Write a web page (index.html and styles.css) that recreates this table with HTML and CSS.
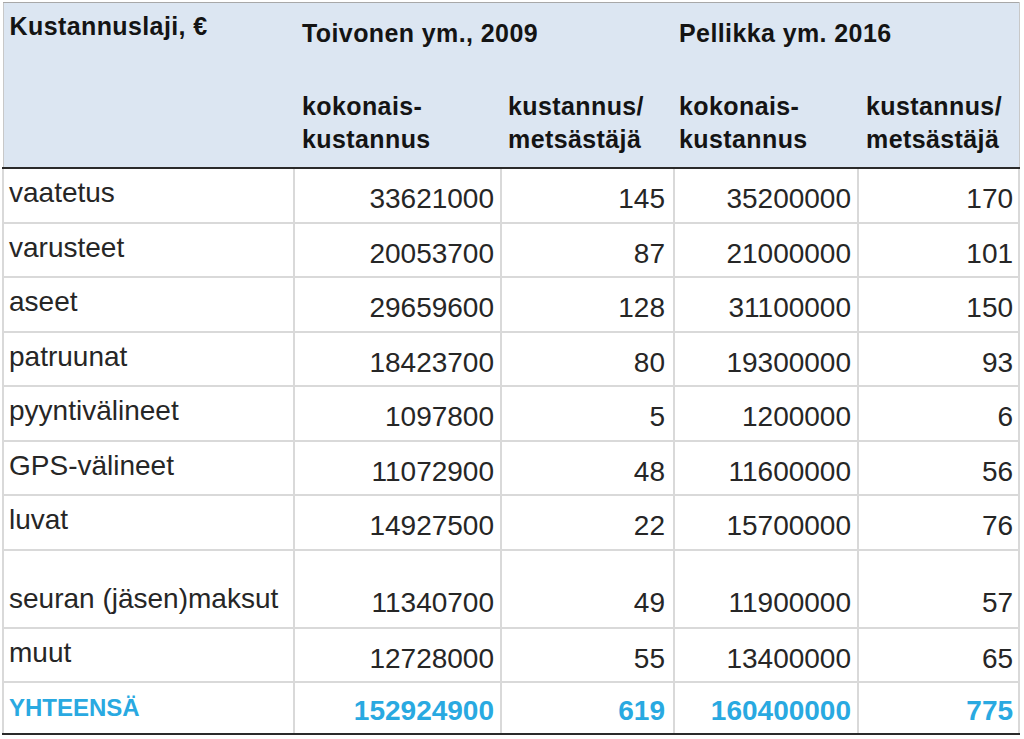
FILE: index.html
```html
<!DOCTYPE html>
<html lang="fi">
<head>
<meta charset="utf-8">
<title>Kustannuslaji</title>
<link rel="stylesheet" href="styles.css">
</head>
<body>
<div class="wrap">
<table class="cost">
  <colgroup>
    <col class="c1"><col class="c2"><col class="c3"><col class="c4"><col class="c5">
  </colgroup>
  <thead>
    <tr class="h1">
      <th class="lab" rowspan="2">Kustannuslaji, €</th>
      <th class="grp" colspan="2">Toivonen ym., 2009</th>
      <th class="grp g2" colspan="2">Pellikka ym. 2016</th>
    </tr>
    <tr class="h2">
      <th class="sub s2">kokonais-<br>kustannus</th>
      <th class="sub s3">kustannus/<br>metsästäjä</th>
      <th class="sub s4">kokonais-<br>kustannus</th>
      <th class="sub s5">kustannus/<br>metsästäjä</th>
    </tr>
  </thead>
  <tbody>
    <tr class="r"><td class="lab">vaatetus</td><td class="n n2">33621000</td><td class="n n3">145</td><td class="n n4">35200000</td><td class="n n5">170</td></tr>
    <tr class="r"><td class="lab">varusteet</td><td class="n n2">20053700</td><td class="n n3">87</td><td class="n n4">21000000</td><td class="n n5">101</td></tr>
    <tr class="r"><td class="lab">aseet</td><td class="n n2">29659600</td><td class="n n3">128</td><td class="n n4">31100000</td><td class="n n5">150</td></tr>
    <tr class="r"><td class="lab">patruunat</td><td class="n n2">18423700</td><td class="n n3">80</td><td class="n n4">19300000</td><td class="n n5">93</td></tr>
    <tr class="r"><td class="lab">pyyntivälineet</td><td class="n n2">1097800</td><td class="n n3">5</td><td class="n n4">1200000</td><td class="n n5">6</td></tr>
    <tr class="r"><td class="lab">GPS-välineet</td><td class="n n2">11072900</td><td class="n n3">48</td><td class="n n4">11600000</td><td class="n n5">56</td></tr>
    <tr class="r"><td class="lab">luvat</td><td class="n n2">14927500</td><td class="n n3">22</td><td class="n n4">15700000</td><td class="n n5">76</td></tr>
    <tr class="r tall"><td class="lab">seuran (jäsen)maksut</td><td class="n n2">11340700</td><td class="n n3">49</td><td class="n n4">11900000</td><td class="n n5">57</td></tr>
    <tr class="r"><td class="lab">muut</td><td class="n n2">12728000</td><td class="n n3">55</td><td class="n n4">13400000</td><td class="n n5">65</td></tr>
    <tr class="r total"><td class="lab">YHTEENSÄ</td><td class="n n2">152924900</td><td class="n n3">619</td><td class="n n4">160400000</td><td class="n n5">775</td></tr>
  </tbody>
</table>
</div>
</body>
</html>
```
FILE: styles.css
```css
html, body {
  margin: 0;
  padding: 0;
  background: #ffffff;
}
.wrap {
  padding: 2px 0 0 2px;
}
.cost {
  border-collapse: collapse;
  table-layout: fixed;
  width: 1016px;
  font-family: "Liberation Sans", Arial, sans-serif;
  color: #262626;
  border-top: 1px solid #a8a8a8;
  border-left: 1px solid #c8c8c8;
  border-right: 1px solid #c8c8c8;
}
.c1 { width: 291px; }
.c2 { width: 207px; }
.c3 { width: 173px; }
.c4 { width: 184px; }
.c5 { width: 161px; }

thead th {
  background: #dce6f2;
  color: #141414;
  font-weight: bold;
  font-size: 25px;
  line-height: 33px;
  text-align: left;
  padding: 0;
  letter-spacing: 0.4px;
}
thead tr.h2 th {
  border-bottom: 2px solid #2a2a2a;
}
th.lab {
  vertical-align: top;
  padding: 7px 0 0 6px;
  border-bottom: 2px solid #2a2a2a;
}
th.grp {
  vertical-align: top;
  height: 53px;
  padding: 14px 0 0 8px;
}
th.g2 { padding-left: 5px; }
th.sub {
  vertical-align: bottom;
  padding: 20px 0 11px 7px;
}
th.s2 { padding-left: 8px; }
th.s4 { padding-left: 5px; }
th.s5 { padding-left: 8px; }

tbody tr.r { height: 54.5px; }
tbody tr.tall { height: 78px; }
tbody tr.total { height: 52px; }

tbody td {
  font-size: 28px;
  line-height: 28px;
  border: 2px solid #d9d9d9;
  vertical-align: top;
  padding: 16px 0 0 0;
}
tbody tr.r:first-child td { border-top: 0; }
tbody td.lab {
  padding: 10px 0 0 5px;
}
tbody td.n { text-align: right; }
td.n2 { padding-right: 6px; }
td.n3 { padding-right: 8px; }
td.n4 { padding-right: 6px; }
td.n5 { padding-right: 5px; }
tbody tr.tall td { padding-top: 38px; }
tbody tr.tall td.lab { padding-top: 34px; }
tbody tr.total td {
  color: #29a9e1;
  font-weight: bold;
  padding-top: 14px;
  border-bottom: 2px solid #2a2a2a;
}
tbody tr.total td.lab {
  font-size: 24px;
  padding-top: 11px;
}
```
